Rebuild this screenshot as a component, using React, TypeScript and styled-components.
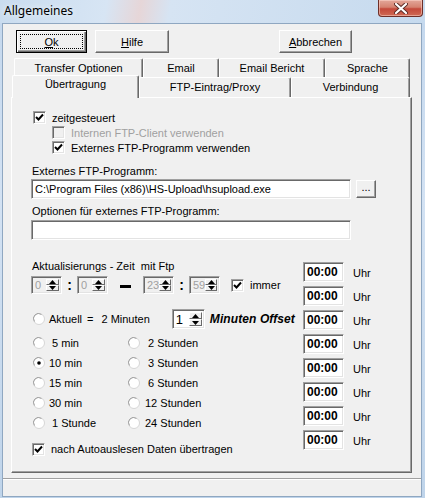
import styled, { createGlobalStyle } from 'styled-components';

const GlobalStyle = createGlobalStyle`
  html, body {
    margin: 0;
    padding: 0;
  }
  body {
    width: 425px;
    height: 498px;
    overflow: hidden;
    font-family: "Liberation Sans", Arial, sans-serif;
    font-size: 11px;
    color: #000;
  }
  * {
    box-sizing: border-box;
  }
`;

const Window = styled.div`
  width: 425px;
  height: 498px;
  display: flex;
  flex-direction: column;
  background: linear-gradient(180deg, #c3d7ed 0%, #d3e2f3 40%, #bfd4ea 100%);
`;

const TitleBar = styled.div`
  height: 23px;
  display: flex;
  align-items: flex-start;
  justify-content: space-between;
  background: linear-gradient(100deg, #c9dcef 0%, #d7e5f4 25%, #e6d6d8 33%, #d6e4f3 40%, #c6daee 100%);
`;

const Title = styled.span`
  font-family: "Noto Sans", "Open Sans", sans-serif;
  font-size: 12px;
  line-height: 16px;
  margin: 3px 0 0 4px;
  text-shadow: 0 0 6px rgba(255, 255, 255, 0.9);
`;

const CloseButton = styled.div`
  width: 45px;
  height: 17px;
  margin-right: 2px;
  display: flex;
  align-items: center;
  justify-content: center;
  border: 1px solid #6e2f28;
  border-top: none;
  border-radius: 0 0 4px 4px;
  background: linear-gradient(180deg, #e3a79a 0%, #d58270 45%, #c4493a 55%, #cf6a55 100%);
  box-shadow: inset 0 0 0 1px rgba(255, 220, 210, 0.5);
`;

const Client = styled.div`
  margin: 0 3px 1px 2px;
  height: 474px;
  border: 1px solid #8fa7c1;
  background: #f0f0f0;
  display: flex;
  flex-direction: column;
`;

const ButtonRow = styled.div`
  display: flex;
  margin-top: 6px;
  padding-left: 13px;
  height: 23px;
`;

const Button = styled.div<{ $width: number; $ml?: number; $default?: boolean }>`
  width: ${({ $width }) => $width}px;
  height: 23px;
  margin-left: ${({ $ml }) => $ml ?? 0}px;
  display: flex;
  align-items: center;
  justify-content: center;
  background: #f0f0f0;
  border: 1px solid;
  border-color: ${({ $default }) => ($default ? '#000' : '#fff #696969 #696969 #fff')};
  box-shadow: ${({ $default }) =>
    $default
      ? 'inset 1px 1px #fff, inset -1px -1px #696969, inset -2px -2px #a0a0a0'
      : 'inset -1px -1px #a0a0a0'};
  position: relative;
  font-size: 11px;
  padding-top: 1px;
`;

const FocusRect = styled.div`
  position: absolute;
  inset: 3px;
  border: 1px dotted #000;
`;

const TabStrip = styled.div`
  margin-top: 4px;
  height: 40px;
  display: flex;
  flex-direction: column;
`;

const TabRow = styled.div<{ $ml: number; $mt: number }>`
  display: flex;
  align-items: flex-start;
  margin-left: ${({ $ml }) => $ml}px;
  margin-top: ${({ $mt }) => $mt}px;
  height: ${({ $mt }) => ($mt ? 19 : 20)}px;
  position: relative;
  z-index: ${({ $mt }) => ($mt ? 0 : 1)};
`;

const Tab = styled.div<{ $width: number; $active?: boolean }>`
  width: ${({ $width }) => $width}px;
  height: ${({ $active }) => ($active ? 23 : 20)}px;
  margin-top: ${({ $active }) => ($active ? -2 : 0)}px;
  background: #f0f0f0;
  border-top: 1px solid #fff;
  border-left: 1px solid #fff;
  border-right: 1px solid #696969;
  box-shadow: inset -1px 0 #a0a0a0;
  border-radius: 2px 2px 0 0;
  display: flex;
  justify-content: center;
  padding-top: ${({ $active }) => ($active ? 2 : 3)}px;
  line-height: 13px;
  position: relative;
  z-index: ${({ $active }) => ($active ? 3 : 1)};
`;

const Panel = styled.div`
  margin-left: 8px;
  width: 401px;
  height: 376px;
  border: 1px solid;
  border-color: #fff #696969 #696969 #fff;
  box-shadow: inset -1px -1px #a0a0a0;
  padding: 12px 0 0 19px;
  display: flex;
  flex-direction: column;
`;

const StatusBar = styled.div`
  margin-top: 5px;
  height: 17px;
  border-top: 1px solid #a0a0a0;
  box-shadow: inset 0 1px #fff;
`;

const CheckRow = styled.div<{ $ml: number; $disabled?: boolean; $h?: number; $mt?: number }>`
  display: flex;
  align-items: center;
  gap: 6px;
  height: ${({ $h }) => $h ?? 15}px;
  margin-left: ${({ $ml }) => $ml}px;
  margin-top: ${({ $mt }) => $mt ?? 0}px;
  color: ${({ $disabled }) => ($disabled ? '#a0a0a0' : '#000')};
  white-space: pre;
`;

const Box = styled.div<{ $disabled?: boolean }>`
  width: 13px;
  height: 13px;
  flex-shrink: 0;
  background: ${({ $disabled }) => ($disabled ? '#f0f0f0' : '#fff')};
  border: 1px solid;
  border-color: #a0a0a0 #fff #fff #a0a0a0;
  box-shadow: inset 1px 1px #696969, inset -1px -1px #e3e3e3;
  display: flex;
  align-items: center;
  justify-content: center;
`;

const FieldLabel = styled.div<{ $mt: number }>`
  margin-top: ${({ $mt }) => $mt}px;
  margin-left: 1px;
  height: 14px;
  line-height: 14px;
  white-space: pre;
`;

const InputRow = styled.div`
  display: flex;
  gap: 5px;
  margin-top: 1px;
`;

const TextInput = styled.div<{ $mt?: number }>`
  width: 320px;
  height: 20px;
  margin-top: ${({ $mt }) => $mt ?? 0}px;
  background: #fff;
  border: 1px solid;
  border-color: #a0a0a0 #fff #fff #a0a0a0;
  box-shadow: inset 1px 1px #696969, inset -1px -1px #e3e3e3;
  padding: 3px 0 0 3px;
  line-height: 13px;
  white-space: pre;
`;

const BrowseButton = styled.div`
  width: 20px;
  height: 18px;
  margin-top: 1px;
  border: 1px solid;
  border-color: #fff #696969 #696969 #fff;
  box-shadow: inset -1px -1px #a0a0a0;
  display: flex;
  justify-content: center;
  line-height: 12px;
  font-size: 11px;
`;

const Lower = styled.div`
  display: grid;
  grid-template-columns: 272px auto;
`;

const LeftCol = styled.div`
  display: flex;
  flex-direction: column;
`;

const SpinRow = styled.div`
  display: flex;
  align-items: center;
  margin-top: 3px;
  height: 18px;
`;

const Spin = styled.div<{ $width: number; $h: number; $disabled?: boolean }>`
  width: ${({ $width }) => $width}px;
  height: ${({ $h }) => $h}px;
  display: flex;
  background: ${({ $disabled }) => ($disabled ? '#f0f0f0' : '#fff')};
  color: ${({ $disabled }) => ($disabled ? '#a0a0a0' : '#000')};
  border: 1px solid;
  border-color: #a0a0a0 #fff #fff #a0a0a0;
  box-shadow: inset 1px 1px #696969, inset -1px -1px #e3e3e3;
  padding: 2px;
`;

const SpinText = styled.div<{ $size: number }>`
  flex: 1;
  padding-left: 1px;
  font-size: ${({ $size }) => $size}px;
  line-height: ${({ $size }) => $size + 2}px;
`;

const SpinArrows = styled.div`
  width: 13px;
  display: flex;
  flex-direction: column;
`;

const ArrowButton = styled.div`
  flex: 1;
  background: #f0f0f0;
  border: 1px solid;
  border-color: #fff #696969 #696969 #fff;
  display: flex;
  align-items: center;
  justify-content: center;
`;

const Sep = styled.div<{ $width: number }>`
  width: ${({ $width }) => $width}px;
  display: flex;
  justify-content: center;
  align-items: center;
  font-weight: bold;
  font-size: 14px;
`;

const Dash = styled.div`
  width: 11px;
  height: 3px;
  background: #000;
  margin-top: 2px;
`;

const RadioRow = styled.div<{ $mt?: number }>`
  display: flex;
  align-items: center;
  height: 20px;
  margin-top: ${({ $mt }) => $mt ?? 0}px;
  margin-left: 2px;
  white-space: pre;
`;

const RadioLabel = styled.span<{ $ml: number }>`
  margin-left: ${({ $ml }) => $ml}px;
`;

const OffsetLabel = styled.span`
  margin-left: 5px;
  font-weight: bold;
  font-style: italic;
  font-size: 12px;
  letter-spacing: 0.1px;
`;

const RadioGrid = styled.div`
  display: grid;
  grid-template-columns: 95px auto;
  margin-top: 4px;
`;

const RightCol = styled.div`
  display: flex;
  flex-direction: column;
  gap: 4px;
  padding-top: 22px;
`;

const TimeRow = styled.div`
  display: flex;
  height: 20px;
`;

const TimeBox = styled.div`
  width: 41px;
  height: 20px;
  background: #fff;
  border: 1px solid;
  border-color: #a0a0a0 #fff #fff #a0a0a0;
  box-shadow: inset 1px 1px #696969, inset -1px -1px #e3e3e3;
  font-weight: bold;
  font-size: 12px;
  line-height: 14px;
  padding: 2px 0 0 3px;
`;

const TimeUnit = styled.span`
  margin-left: 9px;
  padding-top: 5px;
  font-size: 11px;
`;

const Check = () => (
  <svg width="9" height="9" viewBox="0 0 9 9">
    <path d="M1 4 L3.5 6.5 L8 1.5" fill="none" stroke="#000" strokeWidth="2" />
  </svg>
);

const Radio = ({ checked }: { checked?: boolean }) => (
  <svg width="12" height="12" viewBox="0 0 12 12">
    <circle cx="6" cy="6" r="5.5" fill="#fff" stroke="#d6d6d6" />
    <path d="M1.5 8.5 A5 5 0 0 1 8.5 1.5" fill="none" stroke="#a0a0a0" />
    {checked && <circle cx="6" cy="6" r="1.8" fill="#000" />}
  </svg>
);

const Arrow = ({ up }: { up?: boolean }) => (
  <svg width="7" height="4" viewBox="0 0 7 4">
    <path d={up ? 'M0 4 L3.5 0 L7 4 Z' : 'M0 0 L3.5 4 L7 0 Z'} fill="#000" />
  </svg>
);

function Checkbox({ label, checked, disabled, ml, h, mt }: {
  label: string; checked?: boolean; disabled?: boolean; ml: number; h?: number; mt?: number;
}) {
  return (
    <CheckRow $ml={ml} $disabled={disabled} $h={h} $mt={mt}>
      <Box $disabled={disabled}>{checked && <Check />}</Box>
      {label}
    </CheckRow>
  );
}

function SpinBox({ value, width = 31, h = 18, size = 11, disabled }: {
  value: string; width?: number; h?: number; size?: number; disabled?: boolean;
}) {
  return (
    <Spin $width={width} $h={h} $disabled={disabled}>
      <SpinText $size={size}>{value}</SpinText>
      <SpinArrows>
        <ArrowButton><Arrow up /></ArrowButton>
        <ArrowButton><Arrow /></ArrowButton>
      </SpinArrows>
    </Spin>
  );
}

const LEFT_OPTIONS = [' 5 min', '10 min', '15 min', '30 min', ' 1 Stunde'];
const RIGHT_OPTIONS = [' 2 Stunden', ' 3 Stunden', ' 6 Stunden', '12 Stunden', '24 Stunden'];

export default function App() {
  return (
    <>
      <GlobalStyle />
      <Window>
        <TitleBar>
          <Title>Allgemeines</Title>
          <CloseButton>
            <svg width="14" height="11" viewBox="0 0 14 11">
              <path d="M2 1 L12 10 M12 1 L2 10" stroke="#5a2a24" strokeWidth="4" strokeLinecap="round" />
              <path d="M2 1 L12 10 M12 1 L2 10" stroke="#fff" strokeWidth="2.2" strokeLinecap="round" />
            </svg>
          </CloseButton>
        </TitleBar>
        <Client>
          <ButtonRow>
            <Button $width={71} $default>
              <FocusRect />
              <span><u>O</u>k</span>
            </Button>
            <Button $width={74} $ml={8}><span><u>H</u>ilfe</span></Button>
            <Button $width={73} $ml={110}><span><u>A</u>bbrechen</span></Button>
          </ButtonRow>
          <TabStrip>
            <TabRow $ml={11} $mt={1}>
              <Tab $width={129}>Transfer Optionen</Tab>
              <Tab $width={76}>Email</Tab>
              <Tab $width={106}>Email Bericht</Tab>
              <Tab $width={85}>Sprache</Tab>
            </TabRow>
            <TabRow $ml={9} $mt={0}>
              <Tab $width={127} $active>Übertragung</Tab>
              <Tab $width={152}>FTP-Eintrag/Proxy</Tab>
              <Tab $width={119}>Verbindung</Tab>
            </TabRow>
          </TabStrip>
          <Panel>
            <Checkbox ml={2} label="zeitgesteuert" checked />
            <Checkbox ml={21} label="Internen FTP-Client verwenden" disabled />
            <Checkbox ml={21} label="Externes FTP-Programm verwenden" checked />
            <FieldLabel $mt={9}>Externes FTP-Programm:</FieldLabel>
            <InputRow>
              <TextInput>C:\Program Files (x86)\HS-Upload\hsupload.exe</TextInput>
              <BrowseButton>...</BrowseButton>
            </InputRow>
            <FieldLabel $mt={5}>Optionen für externes FTP-Programm:</FieldLabel>
            <TextInput $mt={2} />
            <Lower>
              <LeftCol>
                <FieldLabel $mt={19}>Aktualisierungs - Zeit  mit Ftp</FieldLabel>
                <SpinRow>
                  <SpinBox value="0" disabled />
                  <Sep $width={15}>:</Sep>
                  <SpinBox value="0" disabled />
                  <Sep $width={35}><Dash /></Sep>
                  <SpinBox value="23" disabled />
                  <Sep $width={15}>:</Sep>
                  <SpinBox value="59" disabled />
                  <Checkbox ml={11} h={18} label="immer" checked />
                </SpinRow>
                <RadioRow $mt={15}>
                  <Radio />
                  <RadioLabel $ml={4}>Aktuell</RadioLabel>
                  <RadioLabel $ml={5}>=</RadioLabel>
                  <RadioLabel $ml={8}>2 Minuten</RadioLabel>
                  <RadioLabel $ml={22}>
                    <SpinBox value="1" width={33} h={20} size={13} />
                  </RadioLabel>
                  <OffsetLabel>Minuten Offset</OffsetLabel>
                </RadioRow>
                <RadioGrid>
                  {LEFT_OPTIONS.map((opt, i) => [
                    <RadioRow key={opt}>
                      <Radio checked={i === 1} />
                      <RadioLabel $ml={4}>{opt}</RadioLabel>
                    </RadioRow>,
                    <RadioRow key={RIGHT_OPTIONS[i]}>
                      <Radio />
                      <RadioLabel $ml={5}>{RIGHT_OPTIONS[i]}</RadioLabel>
                    </RadioRow>,
                  ])}
                </RadioGrid>
                <Checkbox ml={1} mt={9} h={14} label="nach Autoauslesen Daten übertragen" checked />
              </LeftCol>
              <RightCol>
                {Array.from({ length: 8 }, (_, i) => (
                  <TimeRow key={i}>
                    <TimeBox>00:00</TimeBox>
                    <TimeUnit>Uhr</TimeUnit>
                  </TimeRow>
                ))}
              </RightCol>
            </Lower>
          </Panel>
          <StatusBar />
        </Client>
      </Window>
    </>
  );
}
